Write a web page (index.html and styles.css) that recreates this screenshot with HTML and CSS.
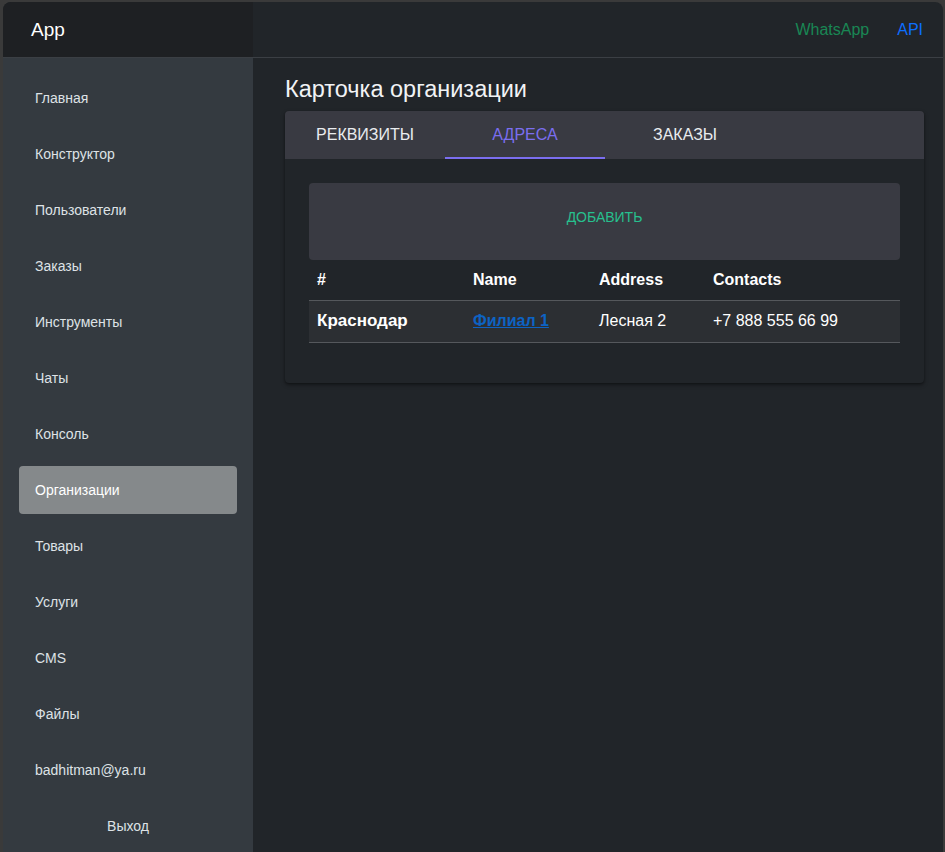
FILE: index.html
```html
<!DOCTYPE html>
<html lang="ru">
<head>
<meta charset="utf-8">
<title>App</title>
<link rel="stylesheet" href="styles.css">
</head>
<body>
<div class="window">
  <header class="topbar">
    <div class="brand">App</div>
    <nav class="toplinks">
      <a class="link-wa" href="#">WhatsApp</a>
      <a class="link-api" href="#">API</a>
    </nav>
  </header>
  <div class="body">
    <aside class="sidebar">
      <a class="nav-item" href="#">Главная</a>
      <a class="nav-item" href="#">Конструктор</a>
      <a class="nav-item" href="#">Пользователи</a>
      <a class="nav-item" href="#">Заказы</a>
      <a class="nav-item" href="#">Инструменты</a>
      <a class="nav-item" href="#">Чаты</a>
      <a class="nav-item" href="#">Консоль</a>
      <a class="nav-item active" href="#">Организации</a>
      <a class="nav-item" href="#">Товары</a>
      <a class="nav-item" href="#">Услуги</a>
      <a class="nav-item" href="#">CMS</a>
      <a class="nav-item" href="#">Файлы</a>
      <a class="nav-item" href="#">badhitman@ya.ru</a>
      <a class="nav-item center" href="#">Выход</a>
    </aside>
    <main class="main">
      <h1 class="title">Карточка организации</h1>
      <section class="card">
        <div class="tabs">
          <div class="tab">РЕКВИЗИТЫ</div>
          <div class="tab active">АДРЕСА</div>
          <div class="tab">ЗАКАЗЫ</div>
        </div>
        <div class="card-body">
          <button class="add-btn" type="button">ДОБАВИТЬ</button>
          <table class="table">
            <thead>
              <tr>
                <th class="c1">#</th>
                <th class="c2">Name</th>
                <th class="c3">Address</th>
                <th class="c4">Contacts</th>
              </tr>
            </thead>
            <tbody>
              <tr>
                <td class="strong">Краснодар</td>
                <td><a class="branch" href="#">Филиал 1</a></td>
                <td>Лесная 2</td>
                <td>+7 888 555 66 99</td>
              </tr>
            </tbody>
          </table>
        </div>
      </section>
    </main>
  </div>
</div>
</body>
</html>
```

FILE: styles.css
```css
* { box-sizing: border-box; }
html, body {
  margin: 0;
  height: 100%;
}
body {
  background: #3a3a3a;
  font-family: "Liberation Sans", Arial, sans-serif;
  padding: 2px 2px 0 3px;
  overflow: hidden;
}
.window {
  height: 100%;
  display: flex;
  flex-direction: column;
  background: #212529;
  border-radius: 8px 8px 0 0;
  overflow: hidden;
}
.topbar {
  height: 56px;
  flex: none;
  display: flex;
  border-bottom: 1px solid #3b3f44;
}
.brand {
  width: 250px;
  background: #1e2023;
  color: #ffffff;
  font-size: 19px;
  padding-left: 28px;
  display: flex;
  align-items: center;
}
.toplinks {
  flex: 1;
  display: flex;
  justify-content: flex-end;
  align-items: center;
  gap: 28px;
  padding-right: 20px;
  font-size: 16px;
}
.toplinks a { text-decoration: none; }
.link-wa { color: #198754; }
.link-api { color: #0d6efd; }
.body {
  flex: 1;
  display: flex;
  min-height: 0;
}
.sidebar {
  width: 250px;
  flex: none;
  background: #343a40;
  padding: 16px 16px 0;
  display: flex;
  flex-direction: column;
  gap: 8px;
}
.nav-item {
  height: 48px;
  flex: none;
  display: flex;
  align-items: center;
  padding-left: 16px;
  color: #dee2e6;
  font-size: 14px;
  text-decoration: none;
  border-radius: 4px;
}
.nav-item.active {
  background: #85898b;
  color: #ffffff;
}
.nav-item.center {
  justify-content: center;
  padding-left: 0;
}
.main {
  flex: 1;
  padding: 16px 19px 0 32px;
}
.title {
  margin: 0;
  font-weight: 400;
  font-size: 23.5px;
  color: #f1f3f5;
  height: 37px;
  line-height: 30px;
}
.card {
  background: #212529;
  border-radius: 4px;
  box-shadow: 0 2px 4px rgba(0, 0, 0, 0.35), 0 1px 2px rgba(0, 0, 0, 0.25);
}
.tabs {
  display: flex;
  height: 48px;
  background: #393a42;
  border-radius: 4px 4px 0 0;
}
.tab {
  width: 160px;
  display: flex;
  align-items: center;
  justify-content: center;
  color: #e9ecef;
  font-size: 16px;
  border-bottom: 2px solid transparent;
  padding-top: 1px;
}
.tab.active {
  color: #7b6ef0;
  border-bottom-color: #7b6ef0;
}
.card-body {
  padding: 24px 24px 40px;
}
.add-btn {
  display: block;
  width: 100%;
  height: 77px;
  border: none;
  border-radius: 4px;
  background: #393a42;
  color: #27c08e;
  font-family: inherit;
  font-size: 14px;
  padding: 0 0 10px;
}
.table {
  width: 100%;
  border-collapse: collapse;
  color: #ffffff;
  font-size: 16px;
}
.table th {
  text-align: left;
  font-weight: 700;
  height: 40px;
  padding: 0 8px;
  border-bottom: 1px solid #55585c;
}
.table td {
  height: 42px;
  padding: 0 8px;
  background: #2c2f33;
  border-bottom: 1px solid #55585c;
}
.c1 { width: 156px; }
.c2 { width: 126px; }
.c3 { width: 114px; }
.strong {
  font-weight: 700;
  font-size: 17px;
}
.branch {
  color: #0d63c4;
  font-weight: 700;
  text-decoration: underline;
}
```
